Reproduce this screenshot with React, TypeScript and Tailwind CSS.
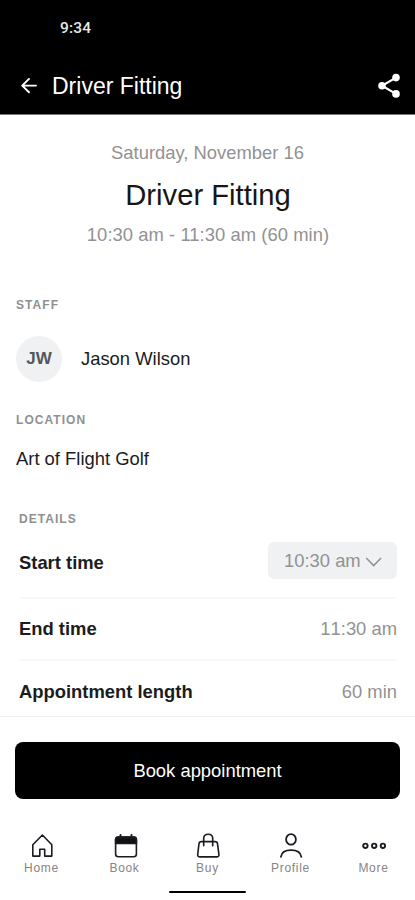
import type { ReactNode } from "react";

const line = { fill: "none", stroke: "#1b1b22", strokeWidth: 1.6, strokeLinejoin: "round", strokeLinecap: "round" } as const;

function BackIcon() {
  return (
    <svg width="18" height="18" viewBox="0 0 18 18" fill="none" stroke="#fff" strokeWidth="1.9" strokeLinecap="round" strokeLinejoin="round">
      <path d="M16 8.6H2.2M9 1.9L2.2 8.6L9 15.3" />
    </svg>
  );
}

function ShareIcon() {
  return (
    <svg width="24" height="26" viewBox="0 0 24 26" fill="#fff">
      <path d="M20 4.6L6 12.7L20 20.9" fill="none" stroke="#fff" strokeWidth="2.2" />
      <circle cx="20" cy="4.6" r="3.8" />
      <circle cx="6" cy="12.7" r="3.8" />
      <circle cx="20" cy="20.9" r="3.8" />
    </svg>
  );
}

function HomeIcon() {
  return (
    <svg width="28" height="28" viewBox="0 0 28 28" {...line}>
      <path d="M14.4 3L4.8 12.8V24.1H11.8V17.3H16.7V24.1H23.8V12.8Z" />
    </svg>
  );
}

function BookIcon() {
  return (
    <svg width="28" height="28" viewBox="0 0 28 28" {...line}>
      <rect x="4.6" y="5" width="20.8" height="19.8" rx="2.8" />
      <path d="M4.6 11.5V7.6Q4.6 5 7.2 5H22.8Q25.4 5 25.4 7.6V11.5Z" fill="#111" />
      <path d="M9.5 3V6M20.5 3V6" strokeWidth="2" />
    </svg>
  );
}

function BuyIcon() {
  return (
    <svg width="28" height="28" viewBox="0 0 28 28" {...line}>
      <path d="M7.4 9.6H21Q23.2 9.6 23.5 11.6L24.9 22.4Q25.2 24.9 22.6 24.9H6Q3.4 24.9 3.7 22.4L5 11.6Q5.2 9.6 7.4 9.6Z" />
      <path d="M9.7 13.8V6.2Q9.9 2.3 14.2 2.3T18.7 6.2V13.8" />
    </svg>
  );
}

function ProfileIcon() {
  return (
    <svg width="28" height="28" viewBox="0 0 28 28" {...line} strokeWidth={1.8}>
      <ellipse cx="14" cy="7.4" rx="4.9" ry="5.3" />
      <path d="M3.9 24.8C4.6 20 7.5 18.1 14 18.1S23.6 20 24.3 24.8" />
    </svg>
  );
}

function MoreIcon() {
  return (
    <svg width="28" height="28" viewBox="0 0 28 28" {...line} strokeWidth={1.9}>
      <circle cx="5.4" cy="13.8" r="2.2" />
      <circle cx="14.2" cy="13.8" r="2.2" />
      <circle cx="22.9" cy="13.8" r="2.2" />
    </svg>
  );
}

function SectionLabel({ children }: { children: ReactNode }) {
  return <h2 className="h-4 text-[12px] leading-[17px] font-bold tracking-[1.05px] text-[#909090]">{children}</h2>;
}

function Tab({ icon, label }: { icon: ReactNode; label: string }) {
  return (
    <button className="flex w-[83px] flex-col items-center">
      {icon}
      <span className="text-[12px] leading-4 tracking-[0.7px] text-[#858585]">{label}</span>
    </button>
  );
}

export default function App() {
  return (
    <div className="flex h-[900px] w-[415px] flex-col overflow-hidden bg-white font-['Liberation_Sans',Arial,sans-serif] text-[#1c1c1c]">
      <header className="h-[115px] shrink-0 border-b border-[#777] bg-black text-white">
        <div className="flex h-[58px] items-center pl-[60px] font-['Roboto',sans-serif] text-[15.5px] font-medium tracking-[0.2px] text-[#e8e8e8]">9:34</div>
        <div className="flex h-[55px] items-center pr-[15px] pl-5">
          <BackIcon />
          <h1 className="ml-[14px] grow text-[23px] leading-7">Driver Fitting</h1>
          <ShareIcon />
        </div>
      </header>

      <main className="flex h-[602px] shrink-0 flex-col border-b border-[#f0f0f0]">
        <section className="flex flex-col items-center pt-[26px] text-[18.4px] leading-6 text-[#929292]">
          <p>Saturday, November 16</p>
          <p className="mt-3 pl-px text-[29.2px] leading-9 text-[#161616]">Driver Fitting</p>
          <p className="mt-[10px] pl-px tracking-[0.05px]">10:30 am - 11:30 am (60 min)</p>
        </section>

        <section className="mt-[50px] px-4">
          <SectionLabel>STAFF</SectionLabel>
          <div className="mt-[22px] flex h-[47px] items-center">
            <div className="flex size-[46px] items-center justify-center rounded-full bg-[#eff1f3] text-[17px] font-bold text-[#54575b]">JW</div>
            <span className="ml-[19px] pt-px text-[18.4px]">Jason Wilson</span>
          </div>
        </section>

        <section className="mt-[30px] px-4">
          <SectionLabel>LOCATION</SectionLabel>
          <p className="mt-[19px] text-[18.4px] leading-6">Art of Flight Golf</p>
        </section>

        <section className="mt-10 pr-[18px] pl-[19px]">
          <SectionLabel>DETAILS</SectionLabel>
          <div className="mt-[15px] flex h-[57px] items-start justify-between border-b-2 border-[#f8f8f8]">
            <span className="mt-[9px] text-[18.4px] leading-6 font-bold">Start time</span>
            <button className="flex h-[37px] w-[129px] items-center rounded-[6px] bg-[#eff1f2] pl-4 text-[18.4px] text-[#929292]">
              10:30 am
              <svg className="mt-[3px] ml-1" width="18" height="12" viewBox="0 0 18 12" fill="none" stroke="#929292" strokeWidth="1.5">
                <path d="M1.2 2L8.7 9.6L16 2" />
              </svg>
            </button>
          </div>
          <div className="flex h-[62px] items-center justify-between border-b-2 border-[#f8f8f8] text-[18.4px]">
            <span className="font-bold">End time</span>
            <span className="text-[#929292] [font-kerning:none]">11:30 am</span>
          </div>
          <div className="flex h-[62px] items-center justify-between text-[18.4px]">
            <span className="font-bold">Appointment length</span>
            <span className="text-[#929292]">60 min</span>
          </div>
        </section>
      </main>

      <div className="shrink-0 px-[15px] pt-[25px]">
        <button className="h-[57px] w-full rounded-[8px] bg-black pt-px text-[18.4px] text-white">Book appointment</button>
      </div>

      <nav className="flex shrink-0 pt-[33px]">
        <Tab icon={<HomeIcon />} label="Home" />
        <Tab icon={<BookIcon />} label="Book" />
        <Tab icon={<BuyIcon />} label="Buy" />
        <Tab icon={<ProfileIcon />} label="Profile" />
        <Tab icon={<MoreIcon />} label="More" />
      </nav>
      <div className="mx-auto mt-[15px] h-[2px] w-[77px] shrink-0 rounded-full bg-black" />
    </div>
  );
}
